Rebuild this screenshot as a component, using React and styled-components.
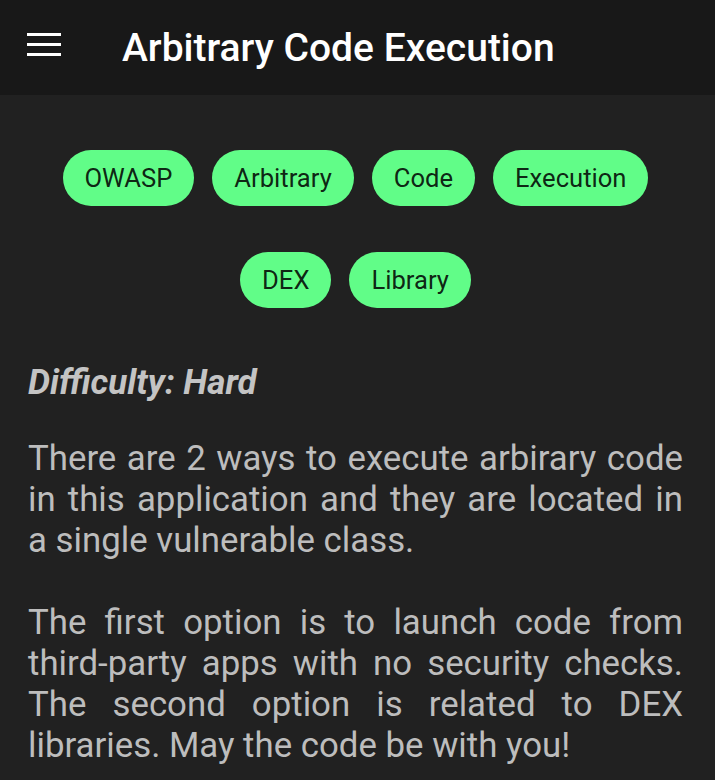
import React from "react";
import styled, { createGlobalStyle } from "styled-components";

const Global = createGlobalStyle`
  html, body { margin: 0; padding: 0; background: #212121; }
  body { font-family: Roboto, "Noto Sans", sans-serif; }
`;

const Page = styled.div`
  width: 715px;
  min-height: 780px;
  background: #212121;
`;

const AppBar = styled.header`
  height: 95px;
  background: #181818;
  display: flex;
  align-items: center;
  padding: 0 0 0 27px;
  box-sizing: border-box;
`;

const MenuButton = styled.div`
  width: 34px;
  display: flex;
  flex-direction: column;
  gap: 7px;
  margin-right: 61px;
  margin-top: -6px;
`;

const MenuLine = styled.span`
  display: block;
  height: 3px;
  background: #ffffff;
`;

const Title = styled.h1`
  margin: 0;
  font-family: Roboto, sans-serif;
  font-weight: 500;
  font-size: 39px;
  line-height: 46px;
  color: #ffffff;
`;

const Content = styled.main`
  padding: 55px 32px 0 28px;
`;

const Tags = styled.div`
  display: flex;
  flex-wrap: wrap;
  justify-content: center;
  column-gap: 18px;
  row-gap: 46px;
  padding: 0 30px;
`;

const Chip = styled.span`
  height: 56px;
  padding: 0 22px;
  border-radius: 28px;
  background: #61fd88;
  color: rgba(0, 0, 0, 0.87);
  font-family: Roboto, sans-serif;
  font-size: 25.6px;
  display: inline-flex;
  align-items: center;
`;

const Difficulty = styled.p`
  margin: 55px 0 0;
  font-family: Roboto, sans-serif;
  font-weight: 700;
  font-style: italic;
  font-size: 35px;
  line-height: 40px;
  color: #c4c4c4;
`;

const Description = styled.p`
  margin: ${(p) => (p.$first ? "35px" : "41px")} 0 0;
  font-family: Roboto, sans-serif;
  font-size: 34.8px;
  line-height: 41px;
  color: #bdbdbd;
  text-align: justify;
`;

const tags = ["OWASP", "Arbitrary", "Code", "Execution", "DEX", "Library"];

export default function App() {
  return (
    <Page>
      <Global />
      <AppBar>
        <MenuButton>
          <MenuLine />
          <MenuLine />
          <MenuLine />
        </MenuButton>
        <Title>Arbitrary Code Execution</Title>
      </AppBar>
      <Content>
        <Tags>
          {tags.map((t) => (
            <Chip key={t}>{t}</Chip>
          ))}
        </Tags>
        <Difficulty>Difficulty: Hard</Difficulty>
        <Description $first>
          There are 2 ways to execute arbirary code in this application and they are located in a single vulnerable class.
        </Description>
        <Description>
          The first option is to launch code from third-party apps with no security checks. The second option is related to DEX libraries. May the code be with you!
        </Description>
      </Content>
    </Page>
  );
}
